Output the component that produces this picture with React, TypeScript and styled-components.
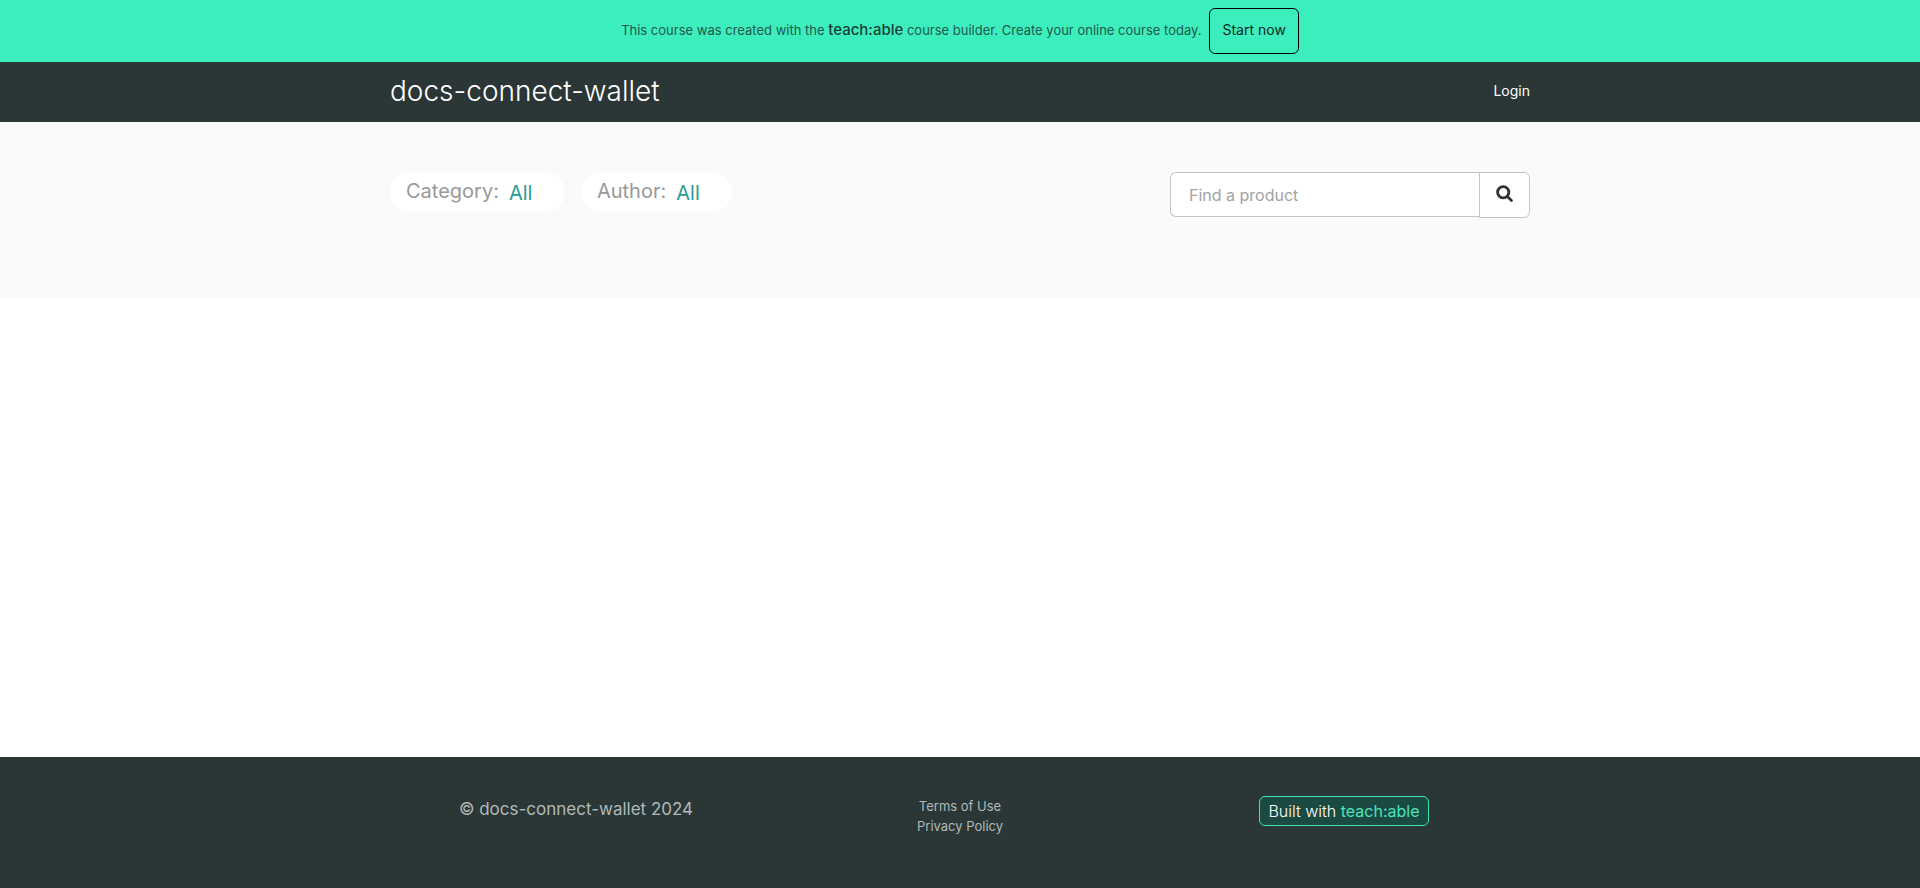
import React from "react";
import styled, { createGlobalStyle } from "styled-components";

const GlobalStyle = createGlobalStyle`
  *, *::before, *::after { box-sizing: border-box; }
  body {
    margin: 0;
    background: #fff;
    font-family: Inter, "Liberation Sans", sans-serif;
    font-weight: 400;
  }
  button, input, select { font: inherit; }
`;

const Page = styled.div`
  min-height: 100vh;
  display: flex;
  flex-direction: column;
`;

const Banner = styled.aside`
  display: flex;
  align-items: center;
  justify-content: center;
  padding: 8px 16px;
  background: #3ceebd;
  color: #1f5a4c;
  font-size: 13px;
  line-height: 20px;
`;

const BannerText = styled.p`
  margin: 0;
  padding-bottom: 2px;
`;

const Wordmark = styled.span<{ $tone: "dark" | "mint" }>`
  font-size: ${(p) => (p.$tone === "dark" ? 15 : 16)}px;
  font-weight: ${(p) => (p.$tone === "dark" ? 500 : 400)};
  color: ${(p) => (p.$tone === "dark" ? "#173f37" : "#4be3bb")};
`;

const StartLink = styled.a`
  display: block;
  margin-left: 8px;
  padding: 11px 12px 13px;
  border: 1px solid #000;
  border-radius: 6px;
  color: #0b2a23;
  font-size: 14px;
  line-height: 20px;
  text-decoration: none;
`;

const Container = styled.div`
  width: 100%;
  max-width: 1170px;
  margin: 0 auto;
  padding: 0 15px;
  display: flex;
  align-items: flex-start;
  justify-content: space-between;
`;

const Header = styled.header`
  background: #2b3636;
`;

const HeaderLink = styled.a<{ $brand?: boolean }>`
  height: 60px;
  color: #fff;
  font-size: ${(p) => (p.$brand ? 28 : 14)}px;
  font-weight: ${(p) => (p.$brand ? 300 : 400)};
  line-height: 58px;
  text-decoration: none;
`;

const Main = styled.main`
  flex: 1;
`;

const FilterBar = styled.section`
  padding: 50px 0 80px;
  background: #fafafa;
`;

const Filters = styled.div`
  display: flex;
  align-items: center;
  gap: 16px;
`;

const Pill = styled.label`
  display: flex;
  align-items: center;
  height: 40px;
  padding: 0 16px 2px;
  border-radius: 20px;
  background: #fff;
  color: #999;
  font-size: 20px;
`;

const PillSelect = styled.select`
  appearance: none;
  width: 40px;
  margin-left: 10px;
  padding: 3px 0 0;
  border: 0;
  background: transparent;
  color: #2a9d8f;
`;

const Search = styled.form`
  display: flex;
  align-items: flex-start;
  width: 360px;
`;

const SearchInput = styled.input`
  flex: 1;
  min-width: 0;
  height: 45px;
  padding: 0 18px;
  border: 1px solid #c4c4c4;
  border-right: 0;
  border-radius: 6px 0 0 6px;
  background: #fff;
  font-size: 16px;
  &::placeholder { color: #a3a3a3; }
`;

const SearchButton = styled.button`
  width: 51px;
  height: 46px;
  display: flex;
  align-items: center;
  justify-content: center;
  padding: 0 0 4px;
  border: 1px solid #c4c4c4;
  border-radius: 0 6px 6px 0;
  background: #fff;
  color: #333;
`;

const Footer = styled.footer`
  background: #2b3636;
  color: #b0bab8;
`;

const FooterGrid = styled.div`
  display: grid;
  grid-template-columns: repeat(3, 1fr);
  max-width: 1152px;
  margin: 0 auto;
  padding: 39px 0 52px;
  justify-items: center;
  align-items: start;
`;

const Copyright = styled.p`
  margin: 0;
  font-size: 17px;
  line-height: 26px;
`;

const Legal = styled.nav`
  display: flex;
  flex-direction: column;
  align-items: center;
  font-size: 13px;
  line-height: 20px;
`;

const LegalLink = styled.a`
  color: inherit;
  text-decoration: none;
`;

const Badge = styled.a`
  display: block;
  padding: 0 8px;
  border: 1px solid #45e0b8;
  border-radius: 6px;
  background: #1a4a42;
  color: #fff;
  font-size: 16px;
  font-weight: 300;
  line-height: 28px;
  text-decoration: none;
  white-space: nowrap;
`;

function FilterPill({ label }: { label: string }) {
  return (
    <Pill>
      {label}:
      <PillSelect defaultValue="all">
        <option value="all">All</option>
      </PillSelect>
    </Pill>
  );
}

export default function App() {
  return (
    <Page>
      <GlobalStyle />
      <Banner>
        <BannerText>
          This course was created with the <Wordmark $tone="dark">teach:able</Wordmark> course
          builder. Create your online course today.
        </BannerText>
        <StartLink href="#start">Start now</StartLink>
      </Banner>
      <Header>
        <Container>
          <HeaderLink $brand href="#home">docs-connect-wallet</HeaderLink>
          <HeaderLink href="#login">Login</HeaderLink>
        </Container>
      </Header>
      <Main>
        <FilterBar>
          <Container>
            <Filters>
              <FilterPill label="Category" />
              <FilterPill label="Author" />
            </Filters>
            <Search role="search">
              <SearchInput type="text" placeholder="Find a product" aria-label="Find a product" />
              <SearchButton type="submit" aria-label="Search">
                <svg width="17" height="17" viewBox="0 0 17 17" fill="none" stroke="currentColor">
                  <circle cx="7.2" cy="7.2" r="5.6" strokeWidth="2.8" />
                  <path d="M11.4 11.4l4 4" strokeLinecap="round" strokeWidth="2.8" />
                </svg>
              </SearchButton>
            </Search>
          </Container>
        </FilterBar>
      </Main>
      <Footer>
        <FooterGrid>
          <Copyright>© docs-connect-wallet 2024</Copyright>
          <Legal>
            <LegalLink href="#terms">Terms of Use</LegalLink>
            <LegalLink href="#privacy">Privacy Policy</LegalLink>
          </Legal>
          <Badge href="#teachable">
            Built with <Wordmark $tone="mint">teach:able</Wordmark>
          </Badge>
        </FooterGrid>
      </Footer>
    </Page>
  );
}
